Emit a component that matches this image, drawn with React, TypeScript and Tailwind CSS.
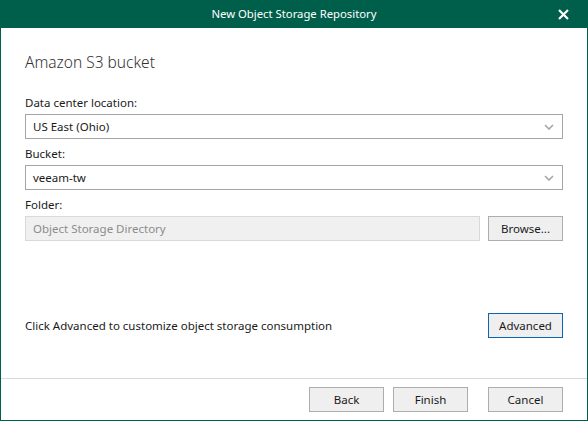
import React from 'react';

const font = { fontFamily: '"Noto Sans", "Open Sans", sans-serif' };

const Chevron = () => (
  <svg width="10" height="6" viewBox="0 0 10 6" className="shrink-0">
    <polyline points="1,1 5,5 9,1" fill="none" stroke="#a6a6a6" strokeWidth="1.6" />
  </svg>
);

const Select = ({ value }: { value: string }) => (
  <div className="h-[25px] border border-[#a5a5a5] bg-white flex items-center justify-between pl-[7px] pr-[8px] text-[11.5px] text-[#1a1a1a]">
    <span>{value}</span>
    <Chevron />
  </div>
);

const Btn = ({ label, focused }: { label: string; focused?: boolean }) => (
  <button
    className={
      'w-[75px] h-[25px] bg-[#efefef] text-[11.5px] text-[#1a1a1a] flex items-center justify-center border ' +
      (focused ? 'border-[#0a64b4]' : 'border-[#adadad]')
    }
  >
    {label}
  </button>
);

export default function App() {
  return (
    <div className="w-[588px] h-[421px] flex flex-col bg-white" style={font}>
      <div className="h-[28px] bg-[#005f4b] flex items-center justify-center relative shrink-0">
        <span className="text-white text-[11.3px]">New Object Storage Repository</span>
        <svg width="11" height="11" viewBox="0 0 11 11" className="absolute right-[19px] top-[9px]">
          <path d="M1 1 L10 10 M10 1 L1 10" stroke="#ffffff" strokeWidth="2.2" />
        </svg>
      </div>
      <div className="flex-1 flex flex-col border-x border-b border-[#005f4b]">
        <div className="flex-1 flex flex-col px-6 pt-[24px] pb-[40px]">
          <h1 className="text-[15.5px] leading-[20px] text-[#333333] font-light">Amazon S3 bucket</h1>

          <div className="mt-[23px] text-[11.5px] leading-[16px] text-[#1a1a1a]">Data center location:</div>
          <div className="mt-[3px]">
            <Select value="US East (Ohio)" />
          </div>

          <div className="mt-[7px] text-[11.5px] leading-[16px] text-[#1a1a1a]">Bucket:</div>
          <div className="mt-[3px]">
            <Select value="veeam-tw" />
          </div>

          <div className="mt-[7px] text-[11.5px] leading-[16px] text-[#1a1a1a]">Folder:</div>
          <div className="mt-[3px] flex gap-[8px]">
            <div className="flex-1 h-[25px] bg-[#f0f0f0] border border-[#d9d9d9] flex items-center pl-[7px] text-[11.5px] text-[#8c8c8c]">
              Object Storage Directory
            </div>
            <Btn label="Browse..." />
          </div>

          <div className="mt-auto flex items-center justify-between">
            <span className="text-[11.5px] text-[#1a1a1a]">Click Advanced to customize object storage consumption</span>
            <Btn label="Advanced" focused />
          </div>
        </div>
        <div className="border-t border-[#d9d9d9] px-6 py-[8px] flex justify-end">
          <div className="flex">
            <Btn label="Back" />
            <div className="ml-[9px]">
              <Btn label="Finish" />
            </div>
            <div className="ml-[20px]">
              <Btn label="Cancel" />
            </div>
          </div>
        </div>
      </div>
    </div>
  );
}
